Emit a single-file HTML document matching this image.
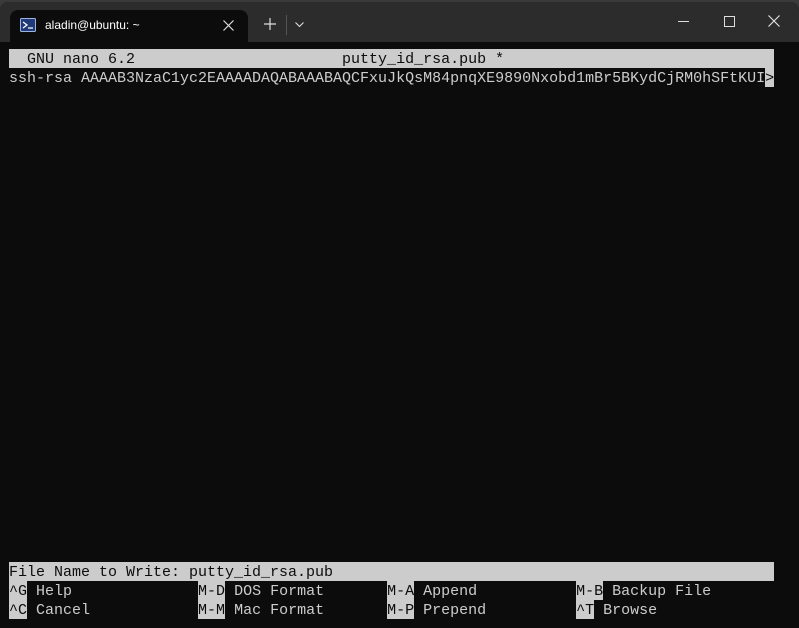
<!DOCTYPE html>
<html><head><meta charset="utf-8"><style>
body{margin:0;width:799px;height:628px;background:#3a3a3a;overflow:hidden;position:relative;font-family:"Liberation Sans",sans-serif}
.win{position:absolute;left:0;top:2px;width:799px;height:626px;background:#0c0c0c;border-radius:8px 8px 0 0;overflow:hidden}
.tb{position:absolute;left:0;top:0;width:799px;height:40px;background:#2c2c2c}
.tab{position:absolute;left:10px;top:8px;width:238px;height:32px;background:#0c0c0c;border-radius:8px 8px 0 0}
.r{position:absolute;left:9px;height:19px;line-height:21px;font-family:"Liberation Mono",monospace;font-size:15px;color:#cccccc;white-space:pre;overflow:hidden}
.h{background:#cccccc;color:#0c0c0c}
.r span.h{display:inline-block;height:19px;vertical-align:top;line-height:21px}
</style></head><body>
<div class="win">
<div class="tb"></div>
<div class="tab">
 <svg style="position:absolute;left:10px;top:8px" width="16" height="14"><rect x="0.5" y="0.5" width="15" height="13" rx="1" fill="#1e3a78" stroke="#9fb3e0"/><path d="M3 4l4 3-4 3" stroke="#fff" fill="none" stroke-width="1.3"/><path d="M8 10h5" stroke="#fff" stroke-width="1.2"/></svg>
 <div style="position:absolute;left:35px;top:8px;font-size:12px;color:#fff">aladin@ubuntu: ~</div>
 <svg style="position:absolute;left:213px;top:10px" width="11" height="11"><path d="M0.5 0.5l10 10M10.5 0.5l-10 10" stroke="#ddd" stroke-width="1.2"/></svg>
</div>
<svg style="position:absolute;left:264px;top:16px" width="12" height="12"><path d="M6 0v12M0 6h12" stroke="#ddd" stroke-width="1.2"/></svg>
<div style="position:absolute;left:286px;top:13px;width:1px;height:20px;background:#555"></div>
<svg style="position:absolute;left:295px;top:20px" width="9" height="6"><path d="M0.5 0.5l4 4 4-4" stroke="#ddd" fill="none" stroke-width="1.1"/></svg>
<div style="position:absolute;left:678px;top:19px;width:11px;height:1px;background:#ddd"></div>
<div style="position:absolute;left:724px;top:14px;width:9px;height:9px;border:1px solid #ddd"></div>
<svg style="position:absolute;left:768px;top:13px" width="12" height="12"><path d="M0.5 0.5l11 11M11.5 0.5l-11 11" stroke="#ddd" stroke-width="1.2"/></svg>
</div>
<div class="r h" style="top:49px;width:765px">  GNU nano 6.2                       putty_id_rsa.pub *</div>
<div class="r" style="top:68px">ssh-rsa AAAAB3NzaC1yc2EAAAADAQABAAABAQCFxuJkQsM84pnqXE9890Nxobd1mBr5BKydCjRM0hSFtKUI<span class="h">&gt;</span></div>
<div class="r h" style="top:562px;width:765px">File Name to Write: putty_id_rsa.pub</div>
<div class="r" style="top:581px"><span class="h">^G</span> Help              <span class="h">M-D</span> DOS Format       <span class="h">M-A</span> Append           <span class="h">M-B</span> Backup File</div>
<div class="r" style="top:600px"><span class="h">^C</span> Cancel            <span class="h">M-M</span> Mac Format       <span class="h">M-P</span> Prepend          <span class="h">^T</span> Browse</div>
</body></html>
